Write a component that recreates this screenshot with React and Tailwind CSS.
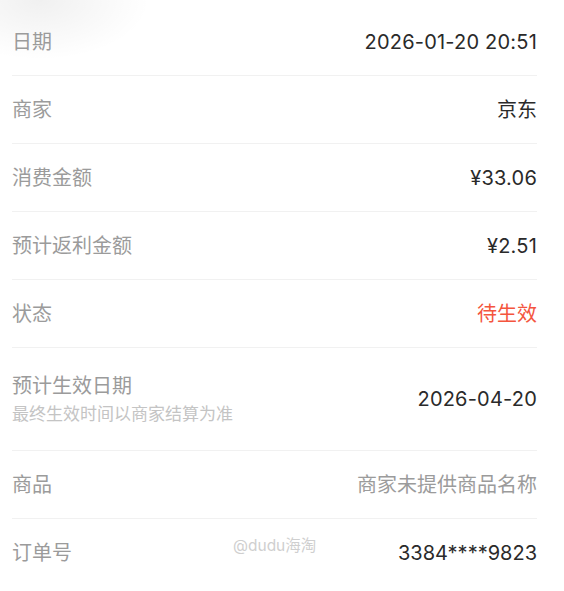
import React from "react";

const font = { fontFamily: '"Inter", "Noto Sans CJK SC", sans-serif' };

function Row({ label, value, valueClass = "text-[#2a2a2a]", tall = false, sub, num = true }) {
  return (
    <div
      className={`flex items-center justify-between border-b border-[#f1f1f1] ${
        tall ? "h-[103px]" : "h-[68px]"
      }`}
    >
      <div className="flex flex-col gap-[5px]">
        <span className="text-[20px] leading-[26px] text-[#9b9b9b]">{label}</span>
        {sub && <span className="text-[17px] leading-[21px] text-[#c4c4c4]">{sub}</span>}
      </div>
      <span
        className={`text-[20px] leading-[26px] ${num ? "tracking-[0.2px]" : ""} ${valueClass}`}
      >
        {value}
      </span>
    </div>
  );
}

export default function App() {
  return (
    <div
      className="relative w-[564px] h-[591px] bg-white overflow-hidden"
      style={font}
    >
      <div className="absolute left-0 top-0 w-[200px] h-[90px] bg-[radial-gradient(ellipse_110px_60px_at_40px_0px,rgba(0,0,0,0.06),rgba(0,0,0,0)_100%)] pointer-events-none" />
      <div className="relative flex flex-col pl-3 pr-[27px] pt-[8px]">
        <Row label="日期" value="2026-01-20 20:51" />
        <Row label="商家" value="京东" num={false} />
        <Row label="消费金额" value="¥33.06" />
        <Row label="预计返利金额" value="¥2.51" />
        <Row label="状态" value="待生效" valueClass="text-[#f4553e]" num={false} />
        <Row label="预计生效日期" sub="最终生效时间以商家结算为准" value="2026-04-20" tall />
        <Row label="商品" value="商家未提供商品名称" valueClass="text-[#9b9b9b]" num={false} />
        <div className="relative flex items-center justify-between h-[68px]">
          <span className="text-[20px] leading-[26px] text-[#9b9b9b]">订单号</span>
          <span className="absolute left-[221px] top-[17px] text-[15.5px] leading-[20px] text-[#cfcfcf]">
            @dudu海淘
          </span>
          <span className="text-[20px] leading-[26px] text-[#2a2a2a]">3384****9823</span>
        </div>
      </div>
    </div>
  );
}
